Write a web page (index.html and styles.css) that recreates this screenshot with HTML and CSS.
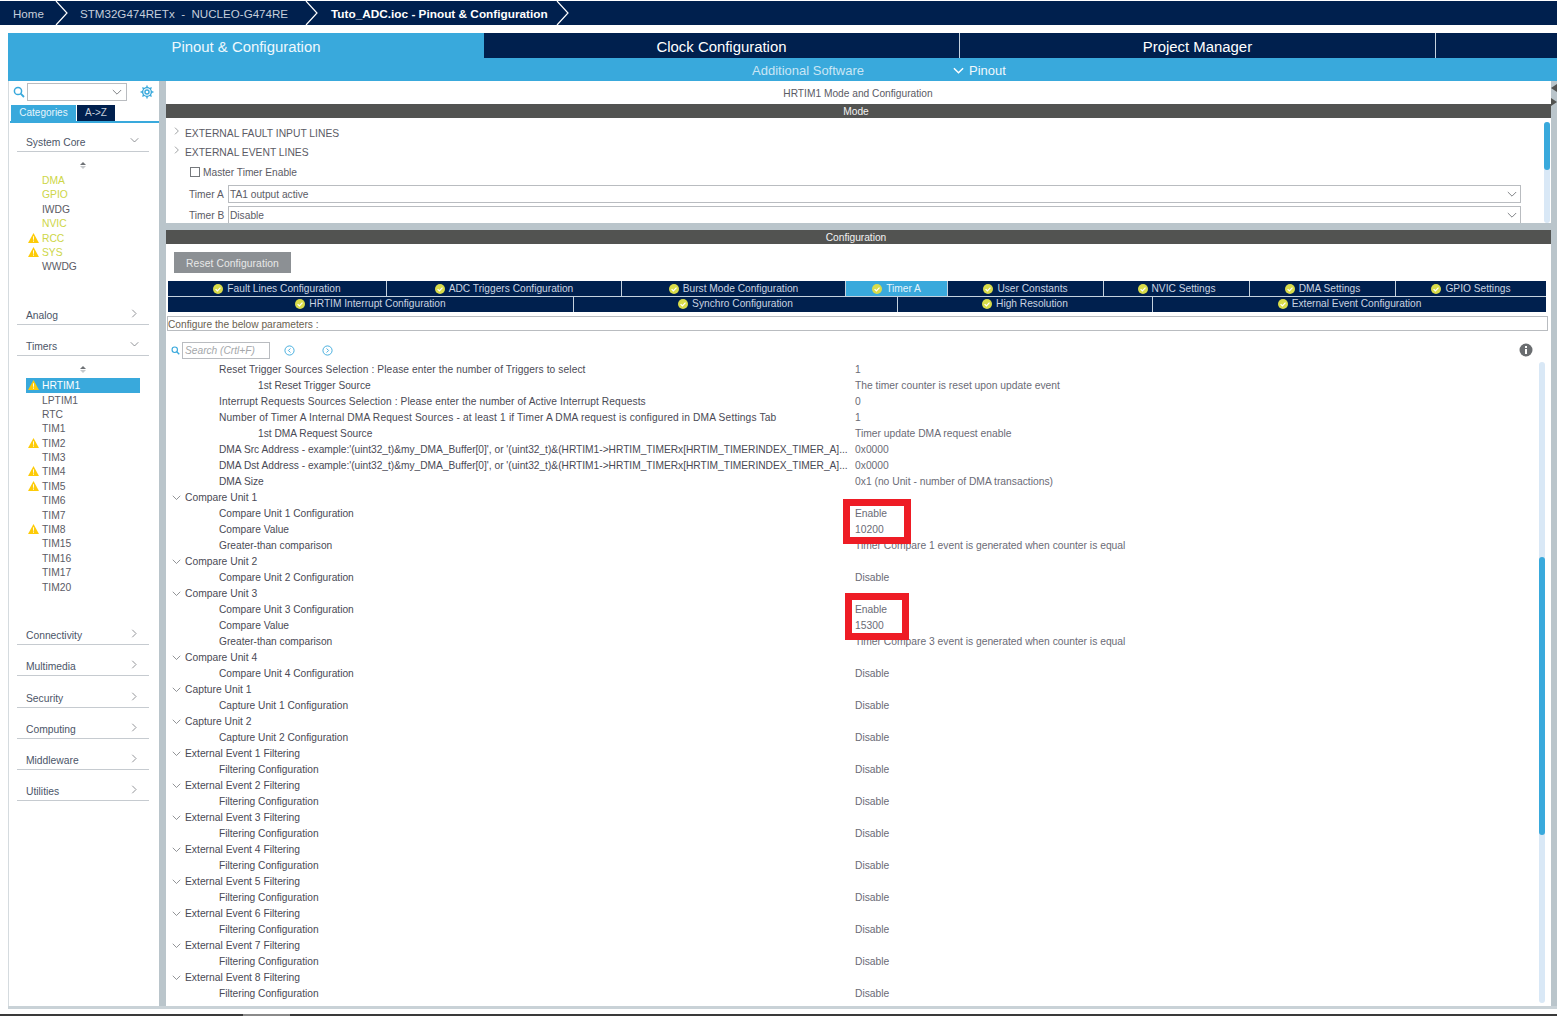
FILE: index.html
```html
<!DOCTYPE html>
<html>
<head>
  <title>Tuto_ADC.ioc - Pinout &amp; Configuration</title>
  <link rel="stylesheet" href="styles.css">
</head>
<body>

<!-- breadcrumb -->
<div class="crumbs">
  <span class="crumb crumb-home">Home</span>
  <svg class="crumb-arrow" viewBox="0 0 14 24"><polyline points="1,0 12,12 1,24"/></svg>
  <span class="crumb crumb-board">STM32G474RETx&nbsp; -&nbsp; NUCLEO-G474RE</span>
  <svg class="crumb-arrow" viewBox="0 0 14 24"><polyline points="1,0 12,12 1,24"/></svg>
  <span class="crumb crumb-file">Tuto_ADC.ioc - Pinout &amp; Configuration</span>
  <svg class="crumb-arrow" viewBox="0 0 14 24"><polyline points="1,0 12,12 1,24"/></svg>
</div>

<!-- main tabs -->
<div class="main-tabs">
  <div class="main-tab active">Pinout &amp; Configuration</div>
  <div class="main-tab">Clock Configuration</div>
  <div class="main-tab">Project Manager</div>
  <div class="main-tab-rest"></div>
</div>
<div class="sub-bar">
  <span class="sub-software">Additional Software</span>
  <span class="sub-pinout">
    <svg class="sub-chevron" viewBox="0 0 12 8"><polyline points="1,1 6,6 11,1"/></svg>
    Pinout
  </span>
</div>

<div class="workspace">

  <!-- left list -->
  <div class="sidebar">
    <div class="side-search">
      <svg class="icon-search" viewBox="0 0 12 12"><circle cx="5" cy="5" r="3.6"/><line x1="7.7" y1="7.7" x2="11" y2="11"/></svg>
      <div class="side-combo">
        <svg class="chev-down" viewBox="0 0 12 8"><polyline points="1,1 6,6 11,1"/></svg>
      </div>
      <svg class="icon-gear" viewBox="0 0 24 24">
        <circle cx="12" cy="12" r="7.5"/>
        <circle cx="12" cy="12" r="3.5"/>
        <path d="M12 1v4M12 19v4M1 12h4M19 12h4M4.2 4.2l2.8 2.8M17 17l2.8 2.8M4.2 19.8L7 17M17 7l2.8-2.8"/>
      </svg>
    </div>
    <div class="side-tabs">
      <div class="side-tab active">Categories</div>
      <div class="side-tab">A-&gt;Z</div>
    </div>

    <div class="cat cat-first">System Core <svg class="cat-chev" viewBox="0 0 12 8"><polyline points="1,1 6,6 11,1"/></svg></div>
    <div class="sort"><span class="sort-up"></span><span class="sort-down"></span></div>
    <div class="items">
      <div class="item on">DMA</div>
      <div class="item on">GPIO</div>
      <div class="item">IWDG</div>
      <div class="item on">NVIC</div>
      <div class="item on"><svg class="warn" viewBox="0 0 12 11"><path class="warn-bg" d="M6 0L12 11H0Z"/><path class="warn-mark" d="M5.5 3.5h1v4h-1zM5.5 8.3h1v1.2h-1z"/></svg>RCC</div>
      <div class="item on"><svg class="warn" viewBox="0 0 12 11"><path class="warn-bg" d="M6 0L12 11H0Z"/><path class="warn-mark" d="M5.5 3.5h1v4h-1zM5.5 8.3h1v1.2h-1z"/></svg>SYS</div>
      <div class="item">WWDG</div>
    </div>

    <div class="cat">Analog <svg class="cat-chev" viewBox="0 0 8 12"><polyline points="1,1 6,6 1,11"/></svg></div>
    <div class="cat">Timers <svg class="cat-chev" viewBox="0 0 12 8"><polyline points="1,1 6,6 11,1"/></svg></div>
    <div class="sort sort-timers"><span class="sort-up"></span><span class="sort-down"></span></div>
    <div class="items">
      <div class="item selected"><svg class="warn" viewBox="0 0 12 11"><path class="warn-bg" d="M6 0L12 11H0Z"/><path class="warn-mark" d="M5.5 3.5h1v4h-1zM5.5 8.3h1v1.2h-1z"/></svg>HRTIM1</div>
      <div class="item">LPTIM1</div>
      <div class="item">RTC</div>
      <div class="item">TIM1</div>
      <div class="item"><svg class="warn" viewBox="0 0 12 11"><path class="warn-bg" d="M6 0L12 11H0Z"/><path class="warn-mark" d="M5.5 3.5h1v4h-1zM5.5 8.3h1v1.2h-1z"/></svg>TIM2</div>
      <div class="item">TIM3</div>
      <div class="item"><svg class="warn" viewBox="0 0 12 11"><path class="warn-bg" d="M6 0L12 11H0Z"/><path class="warn-mark" d="M5.5 3.5h1v4h-1zM5.5 8.3h1v1.2h-1z"/></svg>TIM4</div>
      <div class="item"><svg class="warn" viewBox="0 0 12 11"><path class="warn-bg" d="M6 0L12 11H0Z"/><path class="warn-mark" d="M5.5 3.5h1v4h-1zM5.5 8.3h1v1.2h-1z"/></svg>TIM5</div>
      <div class="item">TIM6</div>
      <div class="item">TIM7</div>
      <div class="item"><svg class="warn" viewBox="0 0 12 11"><path class="warn-bg" d="M6 0L12 11H0Z"/><path class="warn-mark" d="M5.5 3.5h1v4h-1zM5.5 8.3h1v1.2h-1z"/></svg>TIM8</div>
      <div class="item">TIM15</div>
      <div class="item">TIM16</div>
      <div class="item">TIM17</div>
      <div class="item">TIM20</div>
    </div>

    <div class="cat">Connectivity <svg class="cat-chev" viewBox="0 0 8 12"><polyline points="1,1 6,6 1,11"/></svg></div>
    <div class="cat">Multimedia <svg class="cat-chev" viewBox="0 0 8 12"><polyline points="1,1 6,6 1,11"/></svg></div>
    <div class="cat">Security <svg class="cat-chev" viewBox="0 0 8 12"><polyline points="1,1 6,6 1,11"/></svg></div>
    <div class="cat">Computing <svg class="cat-chev" viewBox="0 0 8 12"><polyline points="1,1 6,6 1,11"/></svg></div>
    <div class="cat">Middleware <svg class="cat-chev" viewBox="0 0 8 12"><polyline points="1,1 6,6 1,11"/></svg></div>
    <div class="cat">Utilities <svg class="cat-chev" viewBox="0 0 8 12"><polyline points="1,1 6,6 1,11"/></svg></div>
  </div>

  <!-- right side -->
  <div class="content">
    <div class="panel-title">HRTIM1 Mode and Configuration</div>
    <div class="bar">Mode</div>
    <div class="mode-panel">
      <div class="mode-form">
        <div class="mode-line mode-fault"><svg class="tree-chev" viewBox="0 0 8 12"><polyline points="1,1 6,6 1,11"/></svg>EXTERNAL FAULT INPUT LINES</div>
        <div class="mode-line mode-event"><svg class="tree-chev" viewBox="0 0 8 12"><polyline points="1,1 6,6 1,11"/></svg>EXTERNAL EVENT LINES</div>
        <div class="mode-check"><span class="checkbox"></span>Master Timer Enable</div>
        <div class="mode-select-row">
          <span class="select-label">Timer A</span>
          <div class="select">TA1 output active<svg class="chev-down" viewBox="0 0 12 8"><polyline points="1,1 6,6 11,1"/></svg></div>
        </div>
        <div class="mode-select-row">
          <span class="select-label">Timer B</span>
          <div class="select">Disable<svg class="chev-down" viewBox="0 0 12 8"><polyline points="1,1 6,6 11,1"/></svg></div>
        </div>
      </div>
      <div class="track track-mode"><div class="thumb thumb-mode"></div></div>
    </div>

    <div class="bar bar-config">Configuration</div>
    <div class="config-panel">
      <button class="reset-btn">Reset Configuration</button>

      <div class="tab-row tab-row-a">
        <div class="cfg-tab"><svg class="ok" viewBox="0 0 10 10"><circle cx="5" cy="5" r="5"/><polyline points="2.6,5.2 4.4,7 7.5,3.6"/></svg>Fault Lines Configuration</div>
        <div class="cfg-tab"><svg class="ok" viewBox="0 0 10 10"><circle cx="5" cy="5" r="5"/><polyline points="2.6,5.2 4.4,7 7.5,3.6"/></svg>ADC Triggers Configuration</div>
        <div class="cfg-tab"><svg class="ok" viewBox="0 0 10 10"><circle cx="5" cy="5" r="5"/><polyline points="2.6,5.2 4.4,7 7.5,3.6"/></svg>Burst Mode Configuration</div>
        <div class="cfg-tab active"><svg class="ok" viewBox="0 0 10 10"><circle cx="5" cy="5" r="5"/><polyline points="2.6,5.2 4.4,7 7.5,3.6"/></svg>Timer A</div>
        <div class="cfg-tab"><svg class="ok" viewBox="0 0 10 10"><circle cx="5" cy="5" r="5"/><polyline points="2.6,5.2 4.4,7 7.5,3.6"/></svg>User Constants</div>
        <div class="cfg-tab"><svg class="ok" viewBox="0 0 10 10"><circle cx="5" cy="5" r="5"/><polyline points="2.6,5.2 4.4,7 7.5,3.6"/></svg>NVIC Settings</div>
        <div class="cfg-tab"><svg class="ok" viewBox="0 0 10 10"><circle cx="5" cy="5" r="5"/><polyline points="2.6,5.2 4.4,7 7.5,3.6"/></svg>DMA Settings</div>
        <div class="cfg-tab"><svg class="ok" viewBox="0 0 10 10"><circle cx="5" cy="5" r="5"/><polyline points="2.6,5.2 4.4,7 7.5,3.6"/></svg>GPIO Settings</div>
      </div>
      <div class="tab-row tab-row-b">
        <div class="cfg-tab"><svg class="ok" viewBox="0 0 10 10"><circle cx="5" cy="5" r="5"/><polyline points="2.6,5.2 4.4,7 7.5,3.6"/></svg>HRTIM Interrupt Configuration</div>
        <div class="cfg-tab"><svg class="ok" viewBox="0 0 10 10"><circle cx="5" cy="5" r="5"/><polyline points="2.6,5.2 4.4,7 7.5,3.6"/></svg>Synchro Configuration</div>
        <div class="cfg-tab"><svg class="ok" viewBox="0 0 10 10"><circle cx="5" cy="5" r="5"/><polyline points="2.6,5.2 4.4,7 7.5,3.6"/></svg>High Resolution</div>
        <div class="cfg-tab"><svg class="ok" viewBox="0 0 10 10"><circle cx="5" cy="5" r="5"/><polyline points="2.6,5.2 4.4,7 7.5,3.6"/></svg>External Event Configuration</div>
      </div>

      <div class="hint">Configure the below parameters :</div>

      <div class="param-tools">
        <svg class="icon-search icon-search-small" viewBox="0 0 12 12"><circle cx="5" cy="5" r="3.6"/><line x1="7.7" y1="7.7" x2="11" y2="11"/></svg>
        <div class="param-search">Search (Crtl+F)</div>
        <svg class="nav-btn nav-prev" viewBox="0 0 12 12"><circle cx="6" cy="6" r="5"/><polyline points="7,3.8 4.8,6 7,8.2"/></svg>
        <svg class="nav-btn nav-next" viewBox="0 0 12 12"><circle cx="6" cy="6" r="5"/><polyline points="5,3.8 7.2,6 5,8.2"/></svg>
        <svg class="info" viewBox="0 0 14 14"><circle cx="7" cy="7" r="6.5"/><rect class="info-mark" x="6" y="6" width="2" height="5"/><rect class="info-mark" x="6" y="3" width="2" height="2"/></svg>
      </div>

      <div class="params-wrap">
        <div class="params">
          <div class="row"><span class="label lv1 long">Reset Trigger Sources Selection : Please enter the number of Triggers to select</span><span class="value">1</span></div>
          <div class="row"><span class="label lv2">1st Reset Trigger Source</span><span class="value">The timer counter is reset upon update event</span></div>
          <div class="row"><span class="label lv1 long">Interrupt Requests Sources Selection : Please enter the number of Active Interrupt Requests</span><span class="value">0</span></div>
          <div class="row"><span class="label lv1 longer">Number of Timer A Internal DMA Request Sources - at least 1 if Timer A DMA request is configured in DMA Settings Tab</span><span class="value">1</span></div>
          <div class="row"><span class="label lv2">1st DMA Request Source</span><span class="value">Timer update DMA request enable</span></div>
          <div class="row"><span class="label lv1">DMA Src Address - example:'(uint32_t)&amp;my_DMA_Buffer[0]', or '(uint32_t)&amp;(HRTIM1-&gt;HRTIM_TIMERx[HRTIM_TIMERINDEX_TIMER_A]...</span><span class="value">0x0000</span></div>
          <div class="row"><span class="label lv1">DMA Dst Address - example:'(uint32_t)&amp;my_DMA_Buffer[0]', or '(uint32_t)&amp;(HRTIM1-&gt;HRTIM_TIMERx[HRTIM_TIMERINDEX_TIMER_A]...</span><span class="value">0x0000</span></div>
          <div class="row"><span class="label lv1">DMA Size</span><span class="value">0x1 (no Unit - number of DMA transactions)</span></div>
          <div class="row"><span class="label sec"><svg class="tree-chev" viewBox="0 0 12 8"><polyline points="1,1 6,6 11,1"/></svg>Compare Unit 1</span></div>
          <div class="row"><span class="label lv1">Compare Unit 1 Configuration</span><span class="value">Enable</span></div>
          <div class="row"><span class="label lv1">Compare Value</span><span class="value">10200</span></div>
          <div class="row"><span class="label lv1">Greater-than comparison</span><span class="value">Timer Compare 1 event is generated when counter is equal</span></div>
          <div class="row"><span class="label sec"><svg class="tree-chev" viewBox="0 0 12 8"><polyline points="1,1 6,6 11,1"/></svg>Compare Unit 2</span></div>
          <div class="row"><span class="label lv1">Compare Unit 2 Configuration</span><span class="value">Disable</span></div>
          <div class="row"><span class="label sec"><svg class="tree-chev" viewBox="0 0 12 8"><polyline points="1,1 6,6 11,1"/></svg>Compare Unit 3</span></div>
          <div class="row"><span class="label lv1">Compare Unit 3 Configuration</span><span class="value">Enable</span></div>
          <div class="row"><span class="label lv1">Compare Value</span><span class="value">15300</span></div>
          <div class="row"><span class="label lv1">Greater-than comparison</span><span class="value">Timer Compare 3 event is generated when counter is equal</span></div>
          <div class="row"><span class="label sec"><svg class="tree-chev" viewBox="0 0 12 8"><polyline points="1,1 6,6 11,1"/></svg>Compare Unit 4</span></div>
          <div class="row"><span class="label lv1">Compare Unit 4 Configuration</span><span class="value">Disable</span></div>
          <div class="row"><span class="label sec"><svg class="tree-chev" viewBox="0 0 12 8"><polyline points="1,1 6,6 11,1"/></svg>Capture Unit 1</span></div>
          <div class="row"><span class="label lv1">Capture Unit 1 Configuration</span><span class="value">Disable</span></div>
          <div class="row"><span class="label sec"><svg class="tree-chev" viewBox="0 0 12 8"><polyline points="1,1 6,6 11,1"/></svg>Capture Unit 2</span></div>
          <div class="row"><span class="label lv1">Capture Unit 2 Configuration</span><span class="value">Disable</span></div>
          <div class="row"><span class="label sec"><svg class="tree-chev" viewBox="0 0 12 8"><polyline points="1,1 6,6 11,1"/></svg>External Event 1 Filtering</span></div>
          <div class="row"><span class="label lv1">Filtering Configuration</span><span class="value">Disable</span></div>
          <div class="row"><span class="label sec"><svg class="tree-chev" viewBox="0 0 12 8"><polyline points="1,1 6,6 11,1"/></svg>External Event 2 Filtering</span></div>
          <div class="row"><span class="label lv1">Filtering Configuration</span><span class="value">Disable</span></div>
          <div class="row"><span class="label sec"><svg class="tree-chev" viewBox="0 0 12 8"><polyline points="1,1 6,6 11,1"/></svg>External Event 3 Filtering</span></div>
          <div class="row"><span class="label lv1">Filtering Configuration</span><span class="value">Disable</span></div>
          <div class="row"><span class="label sec"><svg class="tree-chev" viewBox="0 0 12 8"><polyline points="1,1 6,6 11,1"/></svg>External Event 4 Filtering</span></div>
          <div class="row"><span class="label lv1">Filtering Configuration</span><span class="value">Disable</span></div>
          <div class="row"><span class="label sec"><svg class="tree-chev" viewBox="0 0 12 8"><polyline points="1,1 6,6 11,1"/></svg>External Event 5 Filtering</span></div>
          <div class="row"><span class="label lv1">Filtering Configuration</span><span class="value">Disable</span></div>
          <div class="row"><span class="label sec"><svg class="tree-chev" viewBox="0 0 12 8"><polyline points="1,1 6,6 11,1"/></svg>External Event 6 Filtering</span></div>
          <div class="row"><span class="label lv1">Filtering Configuration</span><span class="value">Disable</span></div>
          <div class="row"><span class="label sec"><svg class="tree-chev" viewBox="0 0 12 8"><polyline points="1,1 6,6 11,1"/></svg>External Event 7 Filtering</span></div>
          <div class="row"><span class="label lv1">Filtering Configuration</span><span class="value">Disable</span></div>
          <div class="row"><span class="label sec"><svg class="tree-chev" viewBox="0 0 12 8"><polyline points="1,1 6,6 11,1"/></svg>External Event 8 Filtering</span></div>
          <div class="row"><span class="label lv1">Filtering Configuration</span><span class="value">Disable</span></div>

          <!-- red highlights drawn over the values -->
          <div class="mark mark-one"></div>
          <div class="mark mark-two"></div>
        </div>
        <div class="track track-params"><div class="thumb thumb-params"></div></div>
      </div>
    </div>
  </div>

  <div class="edge">
    <span class="edge-left"></span>
    <span class="edge-right"></span>
  </div>
</div>

<div class="bottom-line"></div>
<div class="taskbar"><span class="taskbar-thumb"></span></div>

</body>
</html>
```

FILE: styles.css
```css
html, body {
  margin: 0;
  padding: 0;
  height: 1016px;
  overflow: hidden;
}

body {
  background-color: #fff;
  font-family: "Liberation Sans", Arial, sans-serif;
  font-size: 10.2px;
  color: #45454f;
}

svg {
  display: block;
  flex: none;
}

svg polyline {
  fill: none;
}

/* Breadcrumb */
.crumbs {
  display: flex;
  align-items: center;
  box-sizing: border-box;
  height: 24px;
  margin-top: 1px;
  background-color: #00204e;
  color: #c5cedb;
  font-size: 11.6px;
}

.crumb {
  padding-top: 1px;
}

.crumb-home {
  margin-left: 13px;
  width: 42px;
}

.crumb-board {
  margin-left: 11px;
  width: 225px;
  white-space: nowrap;
}

.crumb-file {
  margin-left: 12px;
  width: 225px;
  color: #fff;
  font-size: 11.8px;
  font-weight: bold;
  white-space: nowrap;
}

.crumb-arrow {
  width: 14px;
  height: 24px;
}

.crumb-arrow polyline {
  stroke: #fff;
  stroke-width: 1.2;
}

/* Main tabs */
.main-tabs {
  display: flex;
  height: 25px;
  margin: 8px 0 0 8px;
  background-color: #00204e;
}

.main-tab {
  width: 475px;
  border-right: 1px solid #c5d2de;
  color: #fff;
  font-size: 14.9px;
  line-height: 28px;
  text-align: center;
}

.main-tab.active {
  width: 476px;
  background-color: #39a9dc;
  border-right: none;
  color: #eef8fd;
}

.main-tab-rest {
  flex: 1;
}

.sub-bar {
  display: flex;
  align-items: center;
  box-sizing: border-box;
  height: 23px;
  margin-left: 8px;
  padding-top: 2px;
  background-color: #39a9dc;
  font-size: 13px;
}

.sub-software {
  margin-left: 744px;
  width: 196px;
  color: #c9e6f5;
}

.sub-pinout {
  display: flex;
  align-items: center;
  gap: 5px;
  margin-left: 5px;
  color: #f0f8fc;
}

.sub-chevron {
  width: 11px;
  height: 8px;
}

.sub-chevron polyline {
  stroke: #fff;
  stroke-width: 1.6;
}

/* Workspace */
.workspace {
  display: flex;
  height: 925px;
  margin-left: 8px;
  background-color: #bac5cb;
}

.sidebar {
  width: 150px;
  margin-right: 6px;
  border-left: 1px solid #d5dbdf;
  background-color: #fff;
  color: #5b5b65;
  font-size: 10.3px;
}

.side-search {
  display: flex;
  align-items: center;
  height: 18px;
  margin-top: 2px;
}

.icon-search {
  width: 12px;
  height: 12px;
  margin-left: 4px;
}

.icon-search circle {
  fill: none;
  stroke: #39a9dc;
  stroke-width: 1.5;
}

.icon-search line {
  stroke: #39a9dc;
  stroke-width: 1.8;
}

.side-combo {
  display: flex;
  align-items: center;
  justify-content: flex-end;
  box-sizing: border-box;
  width: 100px;
  height: 18px;
  margin-left: 2px;
  padding-right: 4px;
  border: 1px solid #b9bcc0;
}

.chev-down {
  width: 10px;
  height: 7px;
}

.chev-down polyline {
  stroke: #75787c;
  stroke-width: 1.1;
}

.icon-gear {
  width: 14px;
  height: 14px;
  margin-left: 13px;
}

.icon-gear circle, .icon-gear path {
  fill: none;
  stroke: #39a9dc;
  stroke-width: 2.4;
}

.side-tabs {
  display: flex;
  height: 16px;
  margin: 4px 0 0 1px;
  padding-left: 1px;
  border-bottom: 2px solid #39a9dc;
}

.side-tab {
  width: 38px;
  margin-left: 1px;
  background-color: #00204e;
  color: #c5cedb;
  font-size: 10px;
  line-height: 15px;
  text-align: center;
}

.side-tab.active {
  width: 65px;
  margin-left: 0;
  background-color: #39a9dc;
  color: #e6f4fb;
}

.cat {
  display: flex;
  align-items: flex-end;
  justify-content: space-between;
  box-sizing: border-box;
  height: 31.2px;
  margin: 0 10px 0 8px;
  padding: 0 10px 2px 9px;
  border-bottom: 1px solid #c6cbd0;
  color: #4b5568;
  line-height: 13px;
}

.cat-first {
  height: 29px;
}

.cat-chev {
  width: 9px;
  height: 9px;
  margin-bottom: 4px;
}

.cat-chev polyline {
  stroke: #6f7276;
  stroke-width: 1;
}

.sort {
  display: flex;
  flex-direction: column;
  align-items: center;
  gap: 1px;
  box-sizing: border-box;
  height: 21px;
  padding-top: 10px;
  margin-right: 2px;
}

.sort-timers {
  height: 22px;
  padding-top: 10px;
}

.sort-up, .sort-down {
  width: 0;
  height: 0;
  border-left: 3px solid transparent;
  border-right: 3px solid transparent;
}

.sort-up {
  border-bottom: 3px solid #6f7276;
}

.sort-down {
  border-top: 3px solid #c5c8cb;
}

.items {
  margin-bottom: 20px;
}

.item {
  position: relative;
  box-sizing: border-box;
  width: 114px;
  height: 14.4px;
  margin-left: 17px;
  padding-left: 16px;
  line-height: 16px;
}

.item.on {
  color: #cdd647;
}

.item.selected {
  background-color: #39a9dc;
  color: #fff;
}

/* badge on top of the list row */
.warn {
  position: absolute;
  left: 2px;
  top: 2px;
  width: 11px;
  height: 10px;
}

.warn-bg {
  fill: #fdcb08;
}

.warn-mark {
  fill: #fff;
}

/* Right side */
.content {
  width: 1386px;
  display: flex;
  flex-direction: column;
}

.panel-title {
  height: 23px;
  background-color: #fff;
  box-shadow: inset 1px 0 0 #bac5cb;
  line-height: 26px;
  text-align: center;
  color: #5b5b65;
}

.bar {
  height: 14px;
  padding-right: 4px;
  background-color: #525351;
  box-shadow: inset 1px 0 0 #bac5cb;
  color: #f2f2f2;
  line-height: 15px;
  text-align: center;
}

.bar-config {
  margin-top: 7px;
}

.mode-panel {
  display: flex;
  height: 105px;
  overflow: hidden;
  background-color: #fff;
  box-shadow: inset 1px 0 0 #bac5cb;
}

.mode-form {
  flex: 1;
  color: #5b5b65;
}

.mode-line {
  display: flex;
  align-items: center;
  height: 14px;
  padding-left: 8px;
  font-size: 10.3px;
}

.mode-fault {
  margin-top: 8px;
}

.mode-event {
  margin-top: 5px;
}

.tree-chev {
  width: 8px;
  height: 8px;
  margin-right: 4px;
}

.tree-chev polyline {
  stroke: #6f7276;
  stroke-width: 1;
}

.mode-line .tree-chev {
  margin-bottom: 4px;
}

.mode-check {
  display: flex;
  align-items: center;
  height: 14px;
  margin-top: 6px;
  padding-left: 25px;
}

.checkbox {
  box-sizing: border-box;
  width: 10px;
  height: 10px;
  margin-right: 3px;
  border: 1px solid #75787c;
}

.mode-select-row {
  display: flex;
  align-items: center;
  height: 18px;
  margin-top: 3px;
  padding-left: 24px;
}

.mode-check + .mode-select-row {
  margin-top: 6px;
}

.select-label {
  width: 39px;
}

.select {
  display: flex;
  align-items: center;
  justify-content: space-between;
  box-sizing: border-box;
  width: 1293px;
  height: 18px;
  padding: 0 3px 0 1px;
  border: 1px solid #b9bcc0;
}

.track {
  background-color: #d9e8f6;
  border-radius: 3px;
}

.thumb {
  background-color: #39a9dc;
  border-radius: 3px;
}

.track-mode {
  width: 6px;
  margin: 4px 1px 0 0;
}

.thumb-mode {
  height: 48px;
}

.config-panel {
  flex: 1;
  background-color: #fff;
  box-shadow: inset 1px 0 0 #bac5cb;
}

.reset-btn {
  display: block;
  width: 117px;
  height: 21px;
  margin: 8px 0 0 9px;
  padding: 2px 0 0 0;
  border: none;
  background-color: #8c9094;
  color: #e8e8e8;
  font-family: inherit;
  font-size: 10.3px;
  letter-spacing: 0.1px;
}

.tab-row {
  display: grid;
  margin-left: 3px;
  width: 1378px;
  background-color: #00204e;
}

.tab-row-a {
  height: 15px;
  margin-top: 8px;
  grid-template-columns: 219px 235px 224px 102px 156px 146px 146px 150px;
}

.tab-row-b {
  box-sizing: border-box;
  height: 16px;
  padding-bottom: 2px;
  border-top: 1px solid #c5d2de;
  grid-template-columns: 406px 324px 255px 393px;
}

.cfg-tab {
  display: flex;
  align-items: center;
  justify-content: center;
  gap: 4px;
  border-right: 1px solid #c5d2de;
  color: #c9d3e0;
  white-space: nowrap;
}

.tab-row-b .cfg-tab {
  margin-bottom: -2px;
  padding-bottom: 2px;
}

.cfg-tab:last-child {
  border-right: none;
}

.cfg-tab.active {
  background-color: #39a9dc;
  color: #e6f4fb;
}

.ok {
  width: 10px;
  height: 10px;
}

.ok circle {
  fill: #d9dc4a;
}

.ok polyline {
  stroke: #fff;
  stroke-width: 1.2;
}

.hint {
  box-sizing: border-box;
  width: 1381px;
  height: 15px;
  margin: 4px 0 0 2px;
  border: 1px solid #b9bcc0;
  color: #6a6150;
  line-height: 15px;
}

.param-tools {
  display: flex;
  align-items: center;
  height: 16px;
  margin-top: 11px;
}

.icon-search-small {
  width: 9px;
  height: 9px;
  margin-left: 6px;
}

.param-search {
  box-sizing: border-box;
  width: 88px;
  height: 17px;
  margin-left: 2px;
  padding-left: 2px;
  border: 1px solid #b9bcc0;
  color: #a4a7aa;
  font-style: italic;
  line-height: 15px;
}

.nav-btn {
  width: 11px;
  height: 11px;
}

.nav-btn circle, .nav-btn polyline {
  fill: none;
  stroke: #39a9dc;
  stroke-width: 1;
}

.nav-prev {
  margin-left: 14px;
}

.nav-next {
  margin-left: 27px;
}

.info {
  width: 14px;
  height: 14px;
  margin-left: 1186px;
}

.info circle {
  fill: #6a6d70;
}

.info-mark {
  fill: #fff;
}

.params-wrap {
  display: flex;
  margin-top: 4px;
}

.params {
  position: relative;
  width: 1374px;
}

.row {
  display: flex;
  height: 16px;
  line-height: 16px;
}

.label {
  box-sizing: border-box;
  display: flex;
  align-items: center;
  width: 690px;
  color: #4a4a55;
  white-space: nowrap;
}

.lv1 {
  padding-left: 54px;
}

.lv2 {
  padding-left: 93px;
}

.sec {
  padding-left: 7px;
  font-size: 10.3px;
}

.sec .tree-chev {
  margin-right: 4px;
  width: 9px;
}

.long {
  letter-spacing: 0.11px;
}

.longer {
  letter-spacing: 0.16px;
}

.value {
  color: #6b6b76;
  font-size: 10.3px;
  white-space: nowrap;
}

/* Red boxes lie over the table */
.mark {
  position: absolute;
  box-sizing: border-box;
  border: 7px solid #ee1c25;
}

.mark-one {
  left: 678px;
  top: 137px;
  width: 68px;
  height: 45px;
}

.mark-two {
  left: 680px;
  top: 231px;
  width: 64px;
  height: 47px;
}

.track-params {
  width: 6px;
  height: 641px;
}

.thumb-params {
  height: 278px;
  position: relative;
  top: 195px;
}

.edge {
  flex: 1;
  display: flex;
  flex-direction: column;
  gap: 6px;
  padding-top: 3px;
}

.edge-left, .edge-right {
  width: 0;
  height: 0;
  border-top: 4px solid transparent;
  border-bottom: 4px solid transparent;
}

.edge-left {
  border-right: 6px solid #525351;
}

.edge-right {
  border-left: 6px solid #525351;
}

.bottom-line {
  height: 3px;
  margin-left: 8px;
  background-color: #c9d2d7;
}

.taskbar {
  height: 2px;
  margin-top: 5px;
  background-color: #3a3a3a;
}

.taskbar-thumb {
  display: block;
  width: 47px;
  height: 2px;
  margin-left: 243px;
  background-color: #8a8a8a;
}
```
